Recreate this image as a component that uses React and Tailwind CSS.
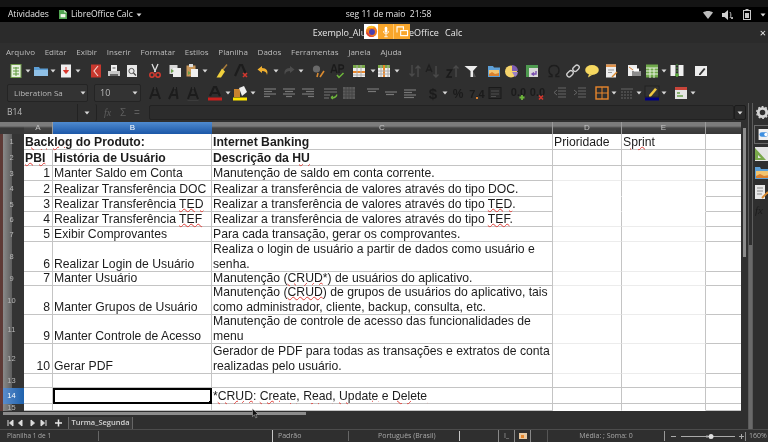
const Svg = ({ children, className = '' }) => (
  <svg viewBox="0 0 16 16" className={`h-4 w-4 shrink-0 ${className}`}>{children}</svg>
)

const Drop = ({ className = '' }) => (
  <svg viewBox="0 0 6 4" className={`h-1 w-1.5 shrink-0 ${className}`}><path d="M0.5 0.5h5L3 3.5z" fill="#d8d8d8" /></svg>
)

const lines = (ys, x1, x2, c = '#8c8c8c') => ys.map((y) => <path key={y} d={`M${x1} ${y}H${x2}`} stroke={c} strokeWidth="1" />)

const DocIcon = () => <Svg><rect x="3" y="1.5" width="10" height="13" fill="#e8f0e0" stroke="#6f9a4a" /><path d="M5 5h6M5 8h6M5 11h6M8 4v9" stroke="#5f9a3c" /></Svg>
const FolderIcon = () => <Svg><path d="M1 4h5l1 1.5h8V13H1z" fill="#5d9fd6" /><path d="M1 7h14v6H1z" fill="#8fc0e6" /></Svg>
const PdfIcon = () => <Svg><rect x="3" y="1.5" width="10" height="13" fill="#eeeeee" /><path d="M8 4v5M5.5 7.5L8 10.5l2.5-3z" fill="#d9342b" stroke="#d9342b" /></Svg>
const BookIcon = () => <Svg><path d="M3 1.5h10v13H3z" fill="#c8382e" /><path d="M10 3L6 8l4 5" stroke="#f3d0c8" strokeWidth="1.2" fill="none" /></Svg>
const PrintIcon = () => <Svg><rect x="5" y="2" width="6" height="6" fill="#f0f0f0" /><rect x="2" y="8" width="12" height="5" fill="#c8c8c8" /><rect x="4" y="11" width="8" height="2" fill="#666" /><path d="M6.5 5h3" stroke="#555" /></Svg>
const PreviewIcon = () => <Svg><rect x="3" y="2" width="10" height="12" fill="#e8e8e8" /><circle cx="7.5" cy="8" r="2.6" fill="none" stroke="#555" /><path d="M9.5 10l2.5 2.5" stroke="#444" strokeWidth="1.3" /></Svg>
const CutIcon = () => <Svg><path d="M5 1l3.5 8M11 1L7.5 9" stroke="#e0e0e0" strokeWidth="1.3" /><circle cx="5" cy="12" r="2.2" fill="none" stroke="#d63a30" strokeWidth="1.5" /><circle cx="11" cy="12" r="2.2" fill="none" stroke="#d63a30" strokeWidth="1.5" /></Svg>
const CopyIcon = () => <Svg><rect x="2.5" y="2" width="8" height="9" fill="#d8d8d8" /><rect x="6" y="5" width="8" height="9" fill="#eeeeee" /><path d="M4 6l3 2-3 2z" fill="#6aa04a" /></Svg>
const PasteIcon = () => <Svg><rect x="2.5" y="2.5" width="9" height="11" fill="#c9975a" /><rect x="5" y="1" width="4" height="3" fill="#ddd" /><rect x="7" y="6" width="7" height="8" fill="#f0f0f0" /><path d="M4 8l3 2-3 2z" fill="#6aa04a" /></Svg>
const BrushIcon = () => <Svg><path d="M13 1.5L8.5 7" stroke="#a87c3c" strokeWidth="1.5" /><path d="M8 5.5l3 3-4 6H2.5z" fill="#f0d03c" /></Svg>
const ClearIcon = () => <Svg><path d="M2 13L7 2h2l3.5 8" fill="none" stroke="#1c1c1c" strokeWidth="2.2" /><path d="M10 10l4 4M14 10l-4 4" stroke="#d6372e" strokeWidth="1.5" /></Svg>
const UndoIcon = () => <Svg><path d="M7 3L2.5 6.5 7 10V8c3 0 4.5 1 5 4 1.5-4-.5-7-5-7z" fill="#f0b030" /></Svg>
const RedoIcon = () => <Svg><path d="M9 3l4.5 3.5L9 10V8c-3 0-4.5 1-5 4-1.5-4 .5-7 5-7z" fill="#4c4c4c" /></Svg>
const FindIcon = () => <Svg><circle cx="6.5" cy="6" r="3.6" fill="#6a6a6a" /><path d="M8 10l-1 4M14 8l-4 6" stroke="#d98a30" strokeWidth="1.6" /></Svg>
const SpellIcon = () => <Svg><path d="M1 10L3.5 2h1L7 10M2 7.5h4" stroke="#1a1a1a" strokeWidth="1.3" fill="none" /><path d="M9 10V2h2.5a2 2 0 010 4H9" stroke="#1a1a1a" strokeWidth="1.3" fill="none" /><path d="M7 12l2 2.5 4.5-4.5" stroke="#6fb83c" strokeWidth="1.5" fill="none" /></Svg>
const RowsIcon = () => <Svg><rect x="2" y="2" width="12" height="12" fill="#efefef" /><path d="M2 2h12v3H2z" fill="#78a848" /><path d="M2 8h12v2H2z" fill="#e8862c" /><path d="M6 2v12M10 2v12M2 12h12" stroke="#aaa" /></Svg>
const ColsIcon = () => <Svg><rect x="2" y="2" width="12" height="12" fill="#efefef" /><path d="M2 2h12v3H2z" fill="#78a848" /><path d="M7 2h2v12H7z" fill="#e8862c" /><path d="M2 8h12M2 11h12M5 2v12M12 2v12" stroke="#aaa" /></Svg>
const SortIcon = () => <Svg><path d="M5 2v11M2.5 10.5L5 13l2.5-2.5M11 14V3M8.5 5.5L11 3l2.5 2.5" stroke="#4a4a4a" strokeWidth="1.4" fill="none" /></Svg>
const SortAIcon = () => <Svg><path d="M1 9l3-7 3 7M2 7h4" stroke="#1f1f1f" strokeWidth="1.3" fill="none" /><path d="M11 3v11M8.5 11.5L11 14l2.5-2.5" stroke="#4a4a4a" strokeWidth="1.4" fill="none" /></Svg>
const SortZIcon = () => <Svg><path d="M1.5 7h5L2 14h5" stroke="#1a1a1a" strokeWidth="1.5" fill="none" /><path d="M11 14V3M8.5 5.5L11 3l2.5 2.5" stroke="#4a4a4a" strokeWidth="1.4" fill="none" /></Svg>
const FilterIcon = () => <Svg><path d="M1.5 3h13L10 8v6H7.5V8z" fill="#ececec" /><path d="M10 8l3 6h-3z" fill="#555" /></Svg>
const GalleryIcon = () => <Svg><path d="M2 3h5l1 1.5h6V14H2z" fill="#5d9fd6" /><path d="M3 7h10v6H3z" fill="#f2c470" /><path d="M3 11l3-2 3 2 4-1v3H3z" fill="#d9802e" /></Svg>
const ChartIcon = () => <Svg><circle cx="7" cy="8.5" r="6" fill="#f5d36b" /><path d="M8 2a6 6 0 016 6H8z" fill="#7c5cb0" /><path d="M8 9h6a6 6 0 01-3 5z" fill="#9a80c8" /></Svg>
const PivotIcon = () => <Svg><rect x="2" y="2" width="12" height="12" fill="#d8d8d8" /><path d="M2 2h12v3H2zM2 5h3v9H2z" fill="#4e9a50" /><path d="M12 8v3H8M10 9.5L8 11l2 1.5" stroke="#7a4fb0" strokeWidth="1.4" fill="none" /></Svg>
const OmegaIcon = () => <Svg><path d="M2.5 13.5H6V12C3.5 11 3 9 3 7.5 3 4.5 5 2.5 8 2.5s5 2 5 5c0 1.5-.5 3.5-3 4.5v1.5h3.5" stroke="#1d1d1d" strokeWidth="1.4" fill="none" /></Svg>
const LinkIcon = () => <Svg><rect x="1.5" y="8.5" width="7" height="4.5" rx="2.2" transform="rotate(-45 5 10.7)" fill="none" stroke="#cfcfcf" strokeWidth="1.4" /><rect x="7.5" y="3" width="7" height="4.5" rx="2.2" transform="rotate(-45 11 5.2)" fill="none" stroke="#cfcfcf" strokeWidth="1.4" /></Svg>
const CommentIcon = () => <Svg><ellipse cx="8" cy="7" rx="6.8" ry="5" fill="#f6d860" /><path d="M5 11l-1 3.5L8 12z" fill="#f6d860" /></Svg>
const NoteIcon = () => <Svg><rect x="3" y="1.5" width="10" height="13" fill="#eeeeee" /><path d="M3 1.5h10V4H3z" fill="#e0924a" /><path d="M5 7h6M5 9.5h4" stroke="#999" /><path d="M9 14l5-5" stroke="#d98a30" strokeWidth="1.5" /></Svg>
const PrintAreaIcon = () => <Svg><rect x="2" y="2" width="9" height="11" fill="#eeeeee" /><path d="M3 4l4 3" stroke="#d9802e" /><rect x="6" y="8" width="9" height="5" fill="#8c8c8c" /><rect x="8" y="5.5" width="5" height="3" fill="#fff" /></Svg>
const TableIcon = () => <Svg><rect x="2" y="1.5" width="12" height="13" fill="#6fa84a" /><path d="M2 5h12M2 8h12M2 11h12M6 5v10M10 5v10" stroke="#e8f0e0" /></Svg>
const SplitIcon = () => <Svg><rect x="1.5" y="2" width="5" height="11" fill="#f0f0f0" /><rect x="9.5" y="2" width="5" height="11" fill="#f0f0f0" /><path d="M8 1v9" stroke="#4a9a3c" strokeDasharray="2 1" /><path d="M6 12h4M8 10v4" stroke="#5fb040" strokeWidth="1.5" /></Svg>
const EditIcon = () => <Svg><rect x="2" y="3" width="12" height="10" fill="#eeeeee" /><path d="M6 11l5-6 1.5 1-5 6H6z" fill="#333" /></Svg>

const AIcon = ({ italic, under }) => (
  <Svg>
    <path
      d={italic ? 'M3 14L8 3h2l1.500 11M5 10h6' : 'M3 14L7 3h2l4 11M5 10h6'}
      fill="none"
      stroke="#1c1c1c"
      strokeWidth="2"
    />
    {under && <path d="M2.500 15.500h11" stroke="#3c3c3c" />}
    <path d={italic ? 'M8 3h2' : 'M7 3h2'} stroke="#444" />
  </Svg>
)
const FontColorIcon = () => <svg viewBox="0 0 16 16" className="h-4 w-4 shrink-0"><path d="M3 11L7 2h2l4 9M5 8h6" fill="none" stroke="#1c1c1c" strokeWidth="2.2" /><rect x="1" y="12.5" width="14" height="3" fill="#c9211e" /></svg>
const BgColorIcon = () => <svg viewBox="0 0 16 16" className="h-4 w-4 shrink-0"><rect x="2" y="4" width="6" height="8" fill="#c9832e" /><path d="M7 3l5-2 3 6-5 4z" fill="#eeeeee" /><rect x="1" y="12.5" width="14" height="3" fill="#ffe600" /></svg>
const AlignIcon = ({ ys, widths }) => (
  <Svg>
    {ys.map((y, i) => (
      <path key={y} d={`M${widths[i][0]} ${y}H${widths[i][1]}`} stroke="#777" strokeWidth="1.2" />
    ))}
  </Svg>
)
const AlignLeft = () => <AlignIcon ys={[4, 6.5, 9, 11.5]} widths={[[2, 14], [2, 10], [2, 14], [2, 8]]} />
const AlignCenter = () => <AlignIcon ys={[4, 6.5, 9, 11.5]} widths={[[2, 14], [4, 12], [2, 14], [5, 11]]} />
const AlignRight = () => <AlignIcon ys={[4, 6.5, 9, 11.5]} widths={[[2, 14], [6, 14], [2, 14], [8, 14]]} />
const AlignTop = () => <AlignIcon ys={[4, 6.5]} widths={[[2, 14], [3, 11]]} />
const AlignMid = () => <AlignIcon ys={[7, 9.5]} widths={[[2, 14], [3, 11]]} />
const AlignBot = () => <AlignIcon ys={[5, 7.5, 10, 12.5]} widths={[[2, 14], [2, 10], [2, 14], [2, 12]]} />
const WrapIcon = () => <Svg>{lines([4, 7], 1, 14, '#777')}<path d="M1 10h6M1 13h5" stroke="#777" /><path d="M8 12.5c3 1 5 0 6-3M8 12.5l2-1.5M8 12.5l2 1.5" stroke="#6fb83c" strokeWidth="1.2" fill="none" /></Svg>
const MergeIcon = () => <Svg><rect x="2" y="2" width="12" height="12" fill="#5a5a5a" /><path d="M2 5h12M2 8h12M2 11h12M5 2v12M8 2v12M11 2v12" stroke="#444" /></Svg>
const DollarIcon = () => <Svg><text x="8" y="13.5" textAnchor="middle" fontSize="15" fontWeight="700" fontFamily="Liberation Sans" fill="#1b1b1b">$</text></Svg>
const PercentIcon = () => <Svg><text x="8" y="12.5" textAnchor="middle" fontSize="12" fontWeight="700" fontFamily="Liberation Sans" fill="#1b1b1b">%</text></Svg>
const NumIcon = () => <Svg><text x="8" y="12.5" textAnchor="middle" fontSize="11" fontWeight="700" fontFamily="Liberation Sans" fill="#1b1b1b">7.4</text><rect x="7" y="12" width="2" height="2" fill="#d9802e" /></Svg>
const DateIcon = () => <Svg><rect x="2" y="2.5" width="12" height="11" fill="#2a2a2a" stroke="#1a1a1a" /><path d="M4 6h8M4 9h8M4 11.5h5" stroke="#4e4e4e" /></Svg>
const DecIcon = ({ add }) => (
  <Svg>
    <text x="7.5" y="10.5" textAnchor="middle" fontSize="11" fontWeight="700" fontFamily="Liberation Sans" fill="#1b1b1b">0.0</text>
    {add
      ? <path d="M11 10v5M8.5 12.5h5" stroke="#6fb83c" strokeWidth="1.8" />
      : <path d="M9 10.5l4 4M13 10.5l-4 4" stroke="#d6372e" strokeWidth="1.6" />}
  </Svg>
)
const IndentIcon = ({ out }) => <Svg>{lines([3, 6, 9, 12], 6, 14, '#666')}<path d={out ? 'M2 5l3 2.5L2 10' : 'M5 5L2 7.5 5 10'} stroke="#666" fill="none" /></Svg>
const BorderIcon = () => <Svg><rect x="2" y="2" width="12" height="12" fill="none" stroke="#e8862c" strokeWidth="1.4" /><path d="M8 2v12M2 8h12" stroke="#e8862c" /></Svg>
const LineStyleIcon = () => <Svg><path d="M2 4h12" stroke="#666" /><path d="M2 7h12M2 10h12M2 13h12" stroke="#666" strokeDasharray="2 1" /></Svg>
const HighlightIcon = () => <svg viewBox="0 0 16 16" className="h-4 w-4 shrink-0"><rect x="1" y="1" width="14" height="11" fill="#333" stroke="#222" /><path d="M5 10l6-7 2 1.5-6 7H5z" fill="#f0c840" /><rect x="1" y="12.5" width="14" height="3" fill="#000080" /></svg>
const CondIcon = () => <Svg><rect x="2" y="2" width="12" height="12" fill="#e4e4e4" /><path d="M2 2h12v3H2z" fill="#c8453a" /><path d="M4 8h3M4 11h6" stroke="#6aa04a" strokeWidth="1.3" /></Svg>

const toolbarOne = [
  ['ml-[8px]', DocIcon], ['ml-px', Drop], ['ml-[2px]', FolderIcon], ['ml-px', Drop], ['ml-[2px]', PdfIcon], ['ml-px', Drop],
  ['ml-[7px]', BookIcon], ['ml-[2px]', PrintIcon], ['ml-[2px]', PreviewIcon],
  ['ml-[7px]', CutIcon], ['ml-[4px]', CopyIcon], ['ml-px', PasteIcon], ['ml-[2px]', Drop],
  ['ml-[6px]', BrushIcon], ['ml-[3px]', ClearIcon],
  ['ml-[6px]', UndoIcon], ['ml-[2px]', Drop], ['ml-[2px]', RedoIcon], ['ml-px', Drop],
  ['ml-[6px]', FindIcon], ['ml-[4px]', SpellIcon],
  ['ml-[5px]', RowsIcon], ['ml-[3px]', Drop], ['ml-0', ColsIcon], ['ml-[2px]', Drop],
  ['ml-[7px]', SortIcon], ['ml-[2px]', SortAIcon], ['ml-[4px]', SortZIcon], ['ml-[2px]', FilterIcon],
  ['ml-[7px]', GalleryIcon], ['ml-[2px]', ChartIcon], ['ml-[4px]', PivotIcon],
  ['ml-[6px]', OmegaIcon], ['ml-[3px]', LinkIcon], ['ml-[3px]', CommentIcon], ['ml-[3px]', NoteIcon],
  ['ml-[7px]', PrintAreaIcon], ['ml-[2px]', TableIcon], ['ml-px', Drop], ['ml-[2px]', SplitIcon], ['ml-[8px]', EditIcon],
]

const A1 = () => <AIcon />
const A2 = () => <AIcon italic />
const A3 = () => <AIcon under />
const DecAdd = () => <DecIcon add />
const DecDel = () => <DecIcon />
const IndentIn = () => <IndentIcon />
const IndentOut = () => <IndentIcon out />

const toolbarTwo = [
  ['ml-[6px]', A1], ['ml-[3px]', A2], ['ml-[3px]', A3],
  ['ml-[6px]', FontColorIcon], ['ml-[2px]', Drop], ['ml-px', BgColorIcon], ['ml-[2px]', Drop],
  ['ml-[6px]', AlignLeft], ['ml-[3px]', AlignCenter], ['ml-[3px]', AlignRight],
  ['ml-[7px]', WrapIcon], ['ml-[2px]', MergeIcon],
  ['ml-[8px]', AlignTop], ['ml-[2px]', AlignMid], ['ml-[3px]', AlignBot],
  ['ml-[7px]', DollarIcon], ['ml-px', Drop], ['ml-[2px]', PercentIcon], ['ml-[3px]', NumIcon], ['ml-[2px]', DateIcon],
  ['ml-[8px]', DecAdd], ['ml-[3px]', DecDel], ['ml-[6px]', IndentIn], ['ml-[4px]', IndentOut],
  ['ml-[6px]', BorderIcon], ['ml-px', Drop], ['ml-[2px]', LineStyleIcon], ['ml-px', Drop], ['ml-[2px]', HighlightIcon], ['ml-px', Drop],
  ['ml-[6px]', CondIcon], ['ml-px', Drop],
]

const menus = ['Arquivo', 'Editar', 'Exibir', 'Inserir', 'Formatar', 'Estilos', 'Planilha', 'Dados', 'Ferramentas', 'Janela', 'Ajuda']

const Sq = ({ children }) => (
  <span className="underline decoration-wavy decoration-[#e0403a] decoration-1 underline-offset-0">{children}</span>
)

const rows = [
  { n: 1, h: 'h-[16px]', title: <b><Sq>Backlog</Sq> do Produto:</b>, c: <b>Internet Banking</b>, d: 'Prioridade', e: <Sq>Sprint</Sq>, line: 'strong' },
  { n: 2, h: 'h-[16px]', a: <b><Sq>PBI</Sq></b>, left: true, b: <b>História de Usuário</b>, c: <b>Descrição da <Sq>HU</Sq></b>, line: 'strong' },
  { n: 3, h: 'h-[15px]', a: 1, b: 'Manter Saldo em Conta', c: 'Manutenção de saldo em conta corrente.', line: 'faint' },
  { n: 4, h: 'h-[16px]', a: 2, b: 'Realizar Transferência DOC', c: 'Realizar a transferência de valores através do tipo DOC.', line: 'none' },
  { n: 5, h: 'h-[15px]', a: 3, b: <>Realizar Transferência <Sq>TED</Sq></>, c: <>Realizar a transferência de valores através do tipo <Sq>TED</Sq>.</>, line: 'none' },
  { n: 6, h: 'h-[15px]', a: 4, b: <>Realizar Transferência <Sq>TEF</Sq></>, c: <>Realizar a transferência de valores através do tipo <Sq>TEF</Sq>.</>, line: 'faint' },
  { n: 7, h: 'h-[15px]', a: 5, b: 'Exibir Comprovantes', c: 'Para cada transação, gerar os comprovantes.', line: 'faint' },
  { n: 8, h: 'h-[30px]', a: 6, b: 'Realizar Login de Usuário', c: <>Realiza o login de usuário a partir de dados como usuário e<br />senha.</>, line: 'faint' },
  { n: 9, h: 'h-[14px]', a: 7, b: 'Manter Usuário', c: <>Manutenção (<Sq>CRUD</Sq>*) de usuários do aplicativo.</>, line: 'faint' },
  { n: 10, h: 'h-[29px]', a: 8, b: 'Manter Grupos de Usuário', c: <>Manutenção (<Sq>CRUD</Sq>) de grupos de usuários do aplicativo, tais<br />como administrador, cliente, backup, consulta, etc.</>, line: 'faint' },
  { n: 11, h: 'h-[29px]', a: 9, b: 'Manter Controle de Acesso', c: <>Manutenção de controle de acesso das funcionalidades de<br />menu</>, line: 'faint' },
  { n: 12, h: 'h-[30px]', a: 10, b: 'Gerar PDF', c: <>Gerador de PDF para todas as transações e extratos de conta<br />realizadas pelo usuário.</>, line: 'faint' },
  { n: 13, h: 'h-[14px]', line: 'strong' },
  { n: 14, h: 'h-[16px]', selected: true, c: <>*<Sq>CRUD</Sq>: <Sq>Create</Sq>, <Sq>Read</Sq>, <Sq>Update</Sq> e <Sq>Delete</Sq></>, line: 'strong' },
  { n: 15, h: 'h-[7px]', line: 'none' },
]

const lineClass = { strong: 'border-b-[#c4c4c4]', faint: 'border-b-[#ececec]', none: 'border-b-white' }

function Row({ row }) {
  const cell = 'flex shrink-0 items-end whitespace-nowrap leading-[14.5px]'
  const edge = 'border-r border-b border-r-[#c4c4c4] border-b-[#c4c4c4]'
  const soft = `border-r border-b border-r-[#c4c4c4] ${lineClass[row.line]}`
  return (
    <div className={`flex ${row.h}`}>
      <div
        className={`flex w-[24px] shrink-0 items-center justify-center overflow-hidden pr-px text-[7.5px] ${
          row.selected
            ? 'bg-[linear-gradient(to_right,#6a3a34_3px,#5b8ccb_3px,#1f62ad_24px)] text-white'
            : 'bg-[linear-gradient(to_right,#5e3a36_3px,#8a8a8a_3px,#5e5e5e_12px,#343434_12px)] text-[#b8b8b8]'
        }`}
      >
        {row.n}
      </div>
      {row.title ? (
        <div className={`${cell} ${edge} w-[188px] pl-px`}><div>{row.title}</div></div>
      ) : (
        <>
          <div className={`${cell} ${edge} w-[29px] ${row.left ? 'justify-start pl-px' : 'justify-end pr-[2px]'}`}><div>{row.a}</div></div>
          <div className={`${cell} relative w-[159px] pl-px ${row.selected ? 'border-2 border-black' : edge}`}>
            <div>{row.b}</div>
            {row.selected && <span className="absolute -right-[2px] -bottom-[2px] h-[3px] w-[3px] bg-black" />}
          </div>
        </>
      )}
      <div className={`${cell} ${edge} w-[341px] pl-px`}><div>{row.c}</div></div>
      <div className={`${cell} ${soft} w-[69px] pl-px`}><div>{row.d}</div></div>
      <div className={`${cell} ${soft} w-[84px] pl-px`}><div>{row.e}</div></div>
      <div className={`${cell} w-[35px] border-b border-b-[#c4c4c4]`} />
    </div>
  )
}

const colHead = 'flex shrink-0 items-center justify-center border-r border-r-[#9a9a9a] text-[8px] text-[#c4c4c4] bg-[linear-gradient(to_bottom,#7c7c7c_4px,#444444_6px,#383838)]'

export default function App() {
  return (
    <div className="relative flex h-[442px] w-[768px] flex-col overflow-hidden bg-[#2f2f2f] font-['Liberation_Sans',sans-serif] blur-[0.4px]">
      <div className="h-[7px] shrink-0 bg-[#141414]" />

      {/* gnome bar */}
      <div className="relative flex h-[15px] shrink-0 items-center bg-black pl-[8px] font-['Open_Sans',sans-serif] text-[8.5px] text-[#e4e4e4]">
        <span>Atividades</span>
        <svg viewBox="0 0 10 11" className="ml-[10px] h-[9px] w-[8px]"><path d="M0 0h6.5L10 3v8H0z" fill="#53a653" /><path d="M6.5 0v3H10z" fill="#d8f0d0" /><rect x="2" y="5" width="6" height="4" fill="#f0f8ea" /></svg>
        <span className="ml-[4px]">LibreOffice Calc</span>
        <Drop className="ml-[3px]" />
        <span className="ml-[204px]">seg 11 de maio&nbsp; 21:58</span>
        <div className="ml-auto flex items-center gap-[6px] pr-[2px]">
          <svg viewBox="0 0 10 8" className="h-[8px] w-[10px]"><path d="M0 1.5C3 -0.5 7 -0.5 10 1.5L5 8z" fill="#bdbdbd" /></svg>
          <svg viewBox="0 0 12 10" className="ml-[3px] h-[10px] w-[12px]"><path d="M0 3h2.5L6 0v10L2.5 7H0z" fill="#cfcfcf" /><path d="M8 2c1.200 1.500 1.200 4.500 0 6" stroke="#bbb" fill="none" /><path d="M9 7l2 2M11 7l-2 2" stroke="#aaa" /></svg>
          <svg viewBox="0 0 8 11" className="ml-[3px] h-[11px] w-[8px]"><rect x="0.500" y="1.500" width="7" height="9" fill="none" stroke="#c8c8c8" /><rect x="2.500" y="0" width="3" height="1.500" fill="#c8c8c8" /><rect x="2" y="4" width="4" height="5" fill="#c8c8c8" /></svg>
          <Drop className="ml-[3px]" />
        </div>
      </div>

      {/* title */}
      <div className="relative flex h-[21px] shrink-0 items-center justify-center bg-[#2b2b2b] pl-[7px] font-['Open_Sans',sans-serif] text-[9px] text-[#e8e8e8] [word-spacing:4px]">
        <span>Exemplo_Aluno - LibreOffice Calc</span>
        <span className="absolute right-[2px] text-[11px] leading-none text-[#e8e8e8]">×</span>
        <div className="absolute top-[2px] left-[364px] flex h-[15px] w-[46px]">
          <div className="flex w-[14px] items-center justify-center bg-white">
            <svg viewBox="0 0 14 14" className="h-[13px] w-[13px]">
              <circle cx="7" cy="7" r="6" fill="#f57c1f" />
              <circle cx="7.500" cy="7.500" r="3.200" fill="#4a3fb0" />
              <path d="M2 3c2-3 8-3 10 0-2-1-3-.5-4 .5C6 3 4 3 2 5z" fill="#fbc02d" />
              <path d="M1 8c1 4 6 6 9 4-3 0-6-1-7-4z" fill="#d93a3a" />
            </svg>
          </div>
          <div className="flex flex-1 items-center bg-[#f9a62b]">
            <svg viewBox="0 0 12 14" className="ml-[2px] h-[12px] w-[12px]"><rect x="4.500" y="1" width="3" height="7" rx="1.500" fill="#fff" /><path d="M3 6c0 4 6 4 6 0M6 9v3M4 12.500h4" stroke="#fff" fill="none" /></svg>
            <span className="ml-px h-full w-px bg-[#ffc76e]" />
            <svg viewBox="0 0 14 12" className="ml-[2px] h-[11px] w-[13px]"><path d="M1 7V1h7v3" fill="none" stroke="#fff" strokeWidth="1.200" /><rect x="5" y="5" width="7.500" height="5.500" fill="none" stroke="#fff" strokeWidth="1.200" /></svg>
          </div>
        </div>
      </div>

      {/* menu */}
      <div className="flex h-[17px] shrink-0 items-center gap-[9.7px] bg-[#2f2f2f] pl-[6px] font-['Open_Sans',sans-serif] text-[8px] text-[#bcbcbc]">
        {menus.map((item) => (
          <span key={item}>{item}</span>
        ))}
      </div>

      {/* standard toolbar */}
      <div className="flex h-[22px] shrink-0 items-center">
        {toolbarOne.map(([ml, Icon], i) => (
          <div key={i} className={`flex shrink-0 ${ml}`}><Icon /></div>
        ))}
      </div>

      {/* format toolbar */}
      <div className="flex h-[21px] shrink-0 items-center">
        <div className="ml-[7px] flex h-[18px] w-[81px] shrink-0 items-center rounded-[2px] border border-[#242424] bg-[#333333] font-['Open_Sans',sans-serif] text-[8px] text-[#b8b8b8]">
          <span className="ml-[6px] w-[62px]">Liberation Sa</span>
          <Drop className="ml-[4px]" />
        </div>
        <div className="ml-[6px] flex h-[18px] w-[47px] shrink-0 items-center rounded-[2px] border border-[#242424] bg-[#333333] font-['Open_Sans',sans-serif] text-[9px] text-[#b8b8b8]">
          <span className="ml-[5px] w-[29px]">10</span>
          <Drop className="ml-[3px]" />
        </div>
        {toolbarTwo.map(([ml, Icon], i) => (
          <div key={i} className={`flex shrink-0 ${ml}`}><Icon /></div>
        ))}
      </div>

      <div className="flex min-h-0 flex-1">
        <div className="flex w-[748px] shrink-0 flex-col">
          {/* formula bar */}
          <div className="flex h-[19px] shrink-0 items-center">
            <div className="flex h-[17px] w-[78px] shrink-0 items-center border-r border-[#222] pl-[7px] font-['Open_Sans',sans-serif] text-[8.5px] text-[#b8b8b8]">B14</div>
            <div className="flex h-[17px] w-[19px] shrink-0 items-center justify-center rounded-r-[2px] border-r border-[#222]"><Drop /></div>
            <span className="ml-[7px] w-[16px] font-['Liberation_Serif',serif] text-[10px] text-[#5e5e5e] italic">fx</span>
            <span className="w-[14px] text-[10px] text-[#5e5e5e]">Σ</span>
            <span className="w-[15px] text-[10px] text-[#5e5e5e]">=</span>
            <div className="h-[15px] w-[585px] shrink-0 rounded-[2px] border border-[#222] bg-[#2c2c2c]" />
            <div className="flex h-[15px] w-[12px] shrink-0 items-center justify-center rounded-[2px] border border-[#1c1c1c] bg-[#2a2a2a]"><Drop /></div>
          </div>

          {/* sheet */}
          <div className="flex h-[289px] shrink-0">
            <div className="w-[741px] shrink-0 overflow-hidden bg-white text-[12.2px] text-[#1c1c1c]">
              <div className="flex h-[12px]">
                <div className="w-[24px] shrink-0 bg-[linear-gradient(to_bottom,#7c7c7c_4px,#383838_6px)]" />
                <div className={`${colHead} w-[29px]`}>A</div>
                <div className="flex w-[159px] shrink-0 items-center justify-center bg-[linear-gradient(to_bottom,#4f8bd0,#1b57a8)] text-[8px] text-white">B</div>
                <div className={`${colHead} w-[341px]`}>C</div>
                <div className={`${colHead} w-[69px]`}>D</div>
                <div className={`${colHead} w-[84px]`}>E</div>
                <div className={`${colHead} w-[35px] border-r-0`} />
              </div>
              {rows.map((row) => (
                <Row key={row.n} row={row} />
              ))}
            </div>
            <div className="flex w-[7px] shrink-0 justify-center pt-[6px]">
              <div className="h-[129px] w-[3px] bg-[#8c8c8c]" />
            </div>
          </div>

          {/* horizontal scroll */}
          <div className="flex h-[5px] shrink-0 items-center pl-[3px]">
            <div className="h-[3px] w-[303px] bg-[#8c8c8c]" />
          </div>

          {/* tabs */}
          <div className="flex h-[13px] shrink-0 items-center font-['Open_Sans',sans-serif] text-[#d8d8d8]">
            <svg viewBox="0 0 56 8" className="ml-[7px] h-[8px] w-[56px]">
              <path d="M1 1v6M6 1L2.500 4 6 7z" stroke="#ddd" fill="#ddd" />
              <path d="M15 1l-3.500 3L15 7z" fill="#ddd" stroke="#ddd" />
              <path d="M24 1l3.500 3L24 7z" fill="#ddd" stroke="#ddd" />
              <path d="M34 1l3.500 3L34 7zM39 1v6" fill="#ddd" stroke="#ddd" />
              <path d="M48 4h7M51.500 .5v7" stroke="#e8e8e8" strokeWidth="1.500" />
            </svg>
            <div className="ml-[5px] flex h-[12px] w-[65px] items-center justify-center border-x border-[#666] bg-[#3a3a3a] text-[7.5px] font-semibold text-[#d4d4d4]">Turma_Segunda</div>
          </div>
        </div>

        {/* sidebar */}
        <div className="flex min-w-0 flex-1">
          <div className="flex w-[5px] shrink-0 flex-col border-x border-[#5c5c5c]">
            <div className="mt-[142px] h-[184px] bg-[#6a6a6a]" />
          </div>
          <div className="flex flex-1 flex-col items-start overflow-hidden pl-[1px]">
            <svg viewBox="0 0 14 14" className="mt-[3px] ml-[2px] h-[13px] w-[13px] shrink-0"><circle cx="7" cy="7" r="4.500" fill="none" stroke="#d4d4d4" strokeWidth="3" /><circle cx="7" cy="7" r="6.300" fill="none" stroke="#d4d4d4" strokeWidth="1.400" strokeDasharray="2 2" /></svg>
            <div className="mt-[6px] flex h-[19px] w-[20px] shrink-0 items-center border border-[#6a6a6a] pl-[3px]">
              <svg viewBox="0 0 14 12" className="h-[11px] w-[14px] shrink-0"><rect width="14" height="12" fill="#f0f0f0" /><rect x="1" y="3.500" width="9" height="5" rx="2.500" fill="#3d8fe0" /><circle cx="8" cy="6" r="1.800" fill="#fff" /></svg>
            </div>
            <svg viewBox="0 0 14 14" className="mt-[3px] ml-[1px] h-[14px] w-[14px] shrink-0"><rect width="14" height="14" fill="#e4e4e4" /><path d="M0 1l11 12H0z" fill="#79a84a" /><path d="M3 8l3 3H3z" fill="#e4e4e4" /></svg>
            <svg viewBox="0 0 14 14" className="mt-[5px] ml-[1px] h-[14px] w-[14px] shrink-0"><path d="M0 1h5l1 2h8v10H0z" fill="#5d9fd6" /><rect x="1" y="5" width="13" height="7" fill="#f2c470" /><path d="M1 10l4-2 4 2 5-1v3H1z" fill="#d9802e" /></svg>
            <svg viewBox="0 0 14 14" className="mt-[5px] ml-[1px] h-[14px] w-[14px] shrink-0"><rect x="0" y="0" width="10" height="14" fill="#e8e8e8" /><path d="M2 3h6M2 6h6M2 9h5" stroke="#8a8a8a" /><path d="M7 13l6-6" stroke="#d98a30" strokeWidth="1.800" /></svg>
            <span className="mt-[5px] ml-[1px] font-['Liberation_Serif',serif] text-[11px] leading-[12px] text-[#1d1d1d] italic">fx</span>
          </div>
        </div>
      </div>

      {/* status bar */}
      <div className="flex h-[13px] shrink-0 items-center border-t border-[#4c4c4c] font-['Open_Sans',sans-serif] text-[7px] text-[#a8a8a8]">
        <span className="w-[99px] shrink-0 border-r border-[#666] pl-[7px] text-[6.5px]">Planilha 1 de 1</span>
        <span className="h-full w-[174px] shrink-0 border-r border-[#c8c8c8]" />
        <span className="w-[76px] shrink-0 border-r border-[#666] pl-[5px]">Padrão</span>
        <span className="w-[111px] shrink-0 border-r border-[#c8c8c8] pl-[29px]">Português (Brasil)</span>
        <span className="w-[38px] shrink-0" />
        <span className="flex h-full w-[17px] shrink-0 items-center justify-center border-x border-[#888]">I_</span>
        <span className="flex h-full w-[16px] shrink-0 items-center justify-center border-r border-[#888]">
          <span className="flex h-[6px] w-[8px] items-center justify-center bg-[#e8c8a0]"><span className="h-[3px] w-[3px] bg-[#e8862c]" /></span>
        </span>
        <span className="h-full w-[17px] shrink-0 border-r border-[#555]" />
        <span className="w-[117px] shrink-0 border-r border-[#999] text-center">Média: ; Soma: 0</span>
        <span className="flex w-[81px] shrink-0 items-center border-r border-[#888] pl-[4px]">
          <svg viewBox="0 0 76 9" className="h-[9px] w-[76px]">
            <path d="M2 4.500h5M70 4.500h5M72.500 2v5M12 4.500h54" stroke="#aaa" />
            <circle cx="42" cy="4.500" r="2.500" fill="#e0e0e0" />
            <path d="M38 3v3" stroke="#aaa" />
          </svg>
        </span>
        <span className="pl-[3px]">160%</span>
      </div>

      {/* mouse pointer */}
      <svg viewBox="0 0 8 12" className="absolute top-[408px] left-[252px] h-[11px] w-[7px]"><path d="M0.500 0.500v9l2.300-2 1.500 3.500 1.500-.7-1.500-3.300h3z" fill="#111" stroke="#ddd" strokeWidth="0.500" /></svg>
    </div>
  )
}
